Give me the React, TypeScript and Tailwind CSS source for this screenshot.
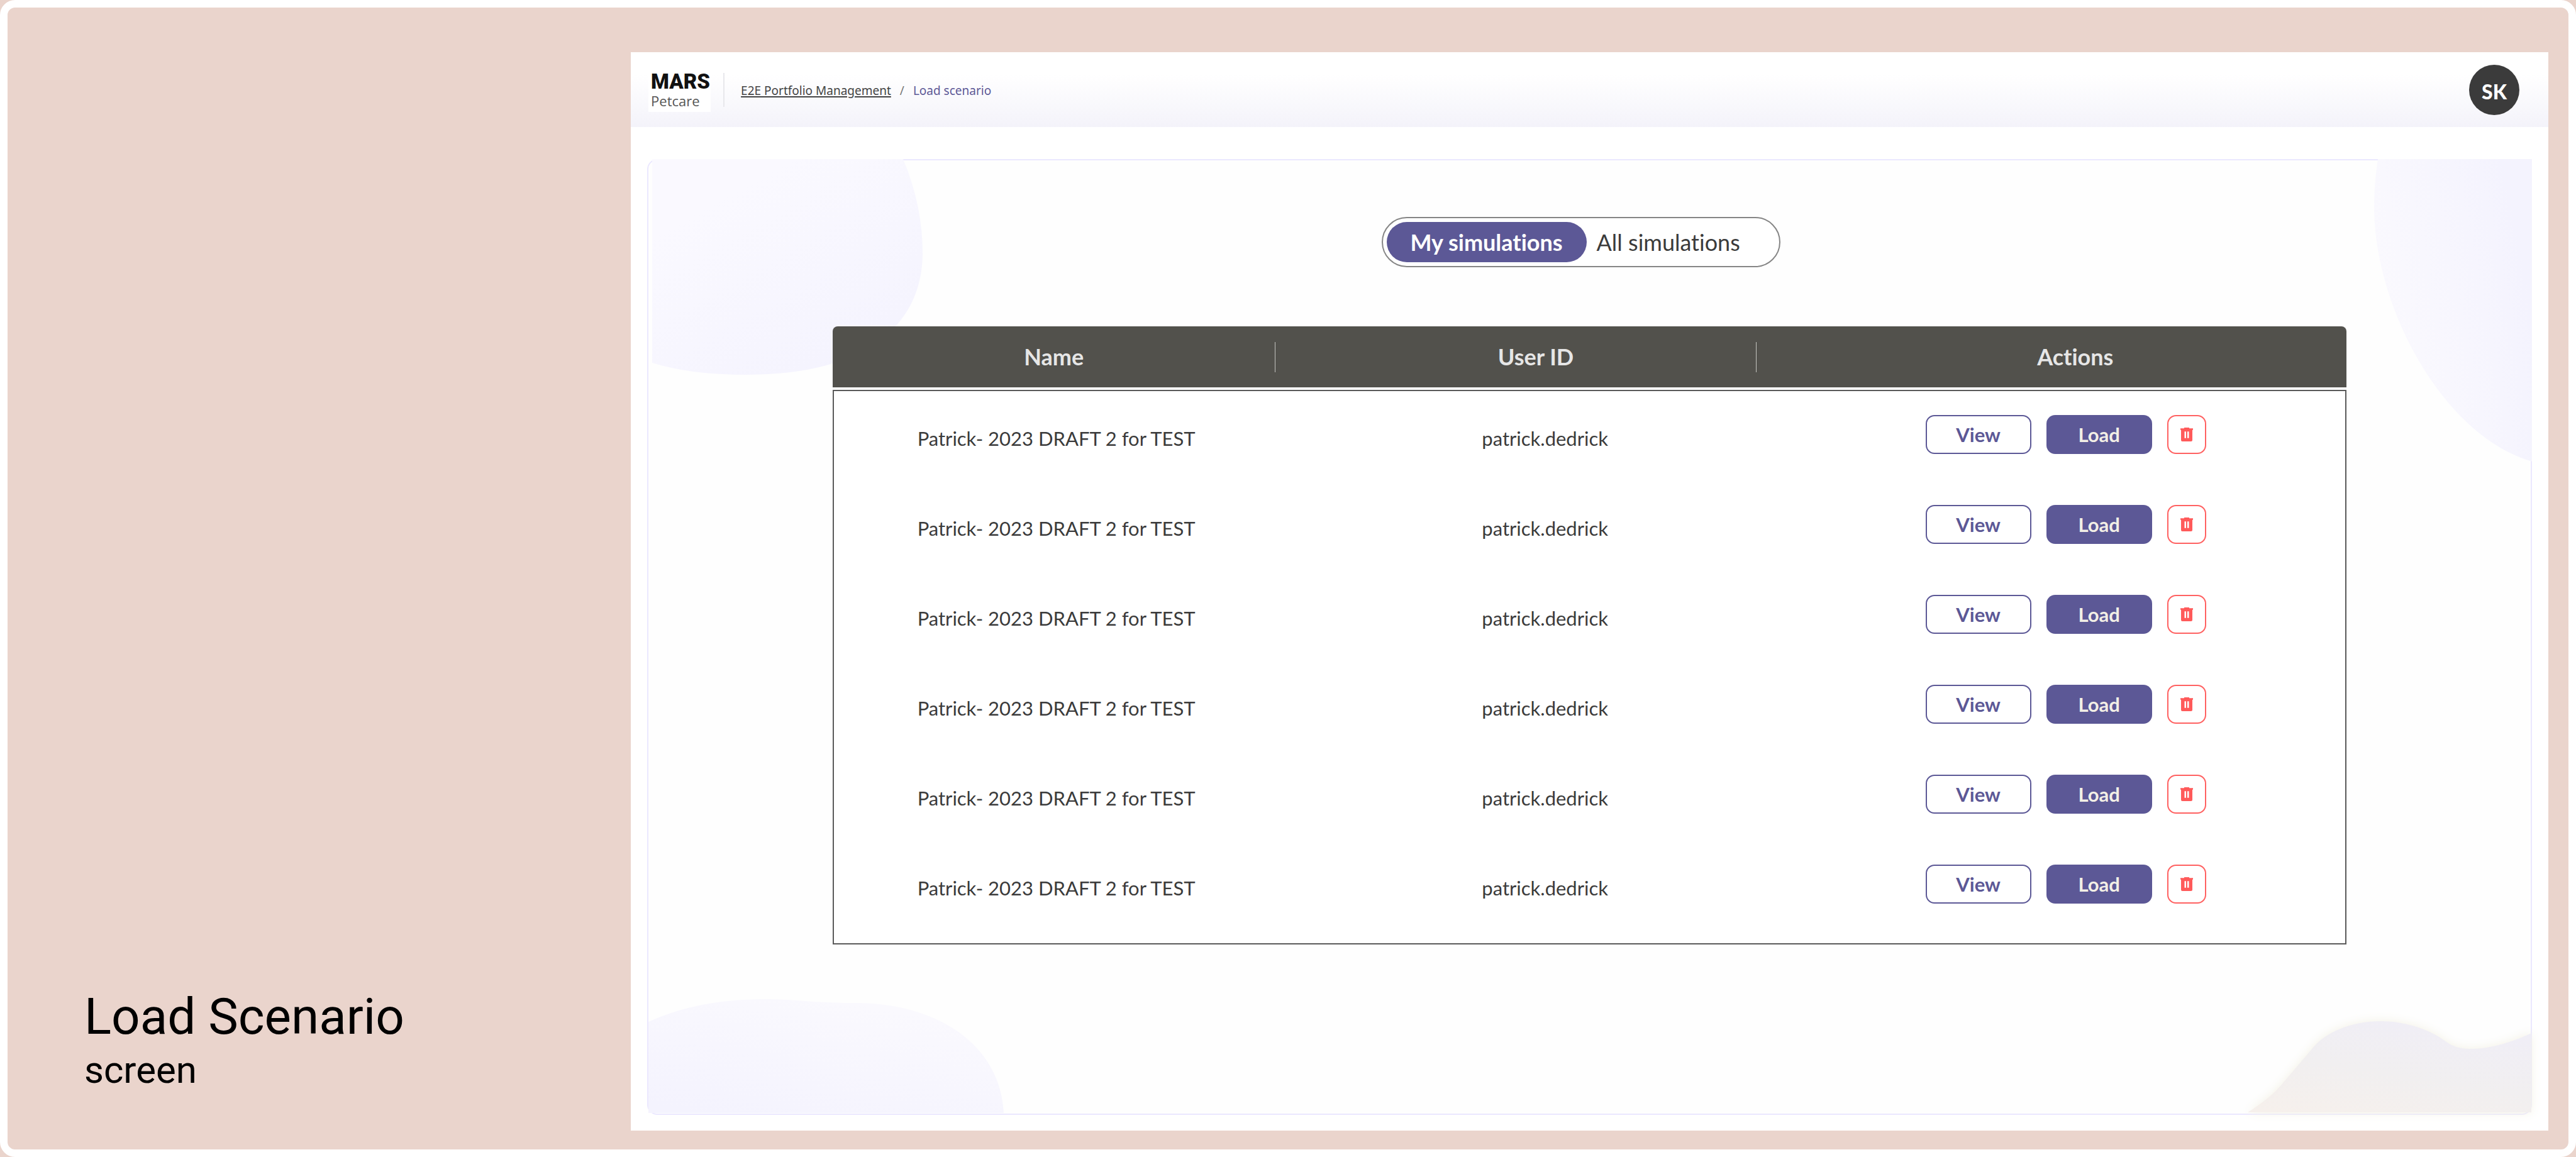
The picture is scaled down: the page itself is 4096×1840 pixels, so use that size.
const scenarios = Array.from({ length: 6 }, (_, i) => ({
  id: i + 1,
  name: "Patrick- 2023 DRAFT 2 for TEST",
  user: "patrick.dedrick",
}));

function TrashIcon() {
  return (
    <svg viewBox="0 0 20 22" className="h-[22px] w-5" aria-hidden="true">
      <path
        fill="currentColor"
        fillRule="evenodd"
        d="M6 0h8v1.2H20v2.500h-1V20a2 2 0 0 1-2 2H3a2 2 0 0 1-2-2V3.700H0V1.200h6zM6.500 6.200h2.500v10.600H6.500zM11 6.200h2.500v10.600H11z"
      />
    </svg>
  );
}

function Backdrop() {
  return (
    <div className="pointer-events-none" aria-hidden="true">
      <svg viewBox="0 0 440 345" className="absolute -top-0.5 left-1.5 h-[345px] w-[440px]">
        <defs>
          <linearGradient id="blobTopLeft" x1="0.1" y1="0" x2="0.8" y2="1">
            <stop offset="0.2" stopColor="#faf9ff" />
            <stop offset="1" stopColor="#f4f3fe" />
          </linearGradient>
        </defs>
        <path
          fill="url(#blobTopLeft)"
          d="M0 0H399C420 50 430 100 430 149C430 255 352 343 149 343C92 343 42 337 0 324Z"
        />
      </svg>
      <svg viewBox="0 0 252 482" className="absolute -top-0.5 -right-0.5 h-[482px] w-[252px]">
        <defs>
          <linearGradient id="blobTopRight" x1="0" y1="0.6" x2="1" y2="0.2">
            <stop offset="0.1" stopColor="#faf9fe" />
            <stop offset="0.9" stopColor="#f4f3fe" />
          </linearGradient>
        </defs>
        <path fill="url(#blobTopRight)" d="M7 0C3 25 1 50 1 77C1 235 110 440 252 481V0Z" />
      </svg>
      <svg viewBox="0 0 566 183" className="absolute bottom-0 left-0 h-[183px] w-[566px]">
        <defs>
          <linearGradient id="blobBottomLeft" x1="0.15" y1="1" x2="0.75" y2="0">
            <stop offset="0" stopColor="#f4f3fe" />
            <stop offset="0.9" stopColor="#faf9fe" />
          </linearGradient>
        </defs>
        <path
          fill="url(#blobBottomLeft)"
          d="M0 37C60 10 120 1 189 1C235 1 260 7 336 7C470 10 560 80 565 182H0Z"
        />
      </svg>
      <svg
        viewBox="0 0 464 157"
        className="absolute -right-0.5 bottom-0 h-[157px] w-[464px] overflow-visible drop-shadow-[0_0_8px_#f4f2e6]"
      >
        <defs>
          <linearGradient id="blobBottomRight" x1="0.1" y1="1" x2="0.6" y2="0">
            <stop offset="0" stopColor="#f6f0ec" />
            <stop offset="0.5" stopColor="#f1eff0" />
            <stop offset="1" stopColor="#f0eef6" />
          </linearGradient>
        </defs>
        <path
          fill="url(#blobBottomRight)"
          d="M12 155C40 137 55 124 69 107L115 53C135 28 175 10 224 10C265 10 305 25 328 43C338 50 350 54 366 54C400 54 435 42 463 29V155Z"
        />
      </svg>
    </div>
  );
}

function TopBar() {
  return (
    <header className="flex h-[119px] items-center bg-linear-to-b from-white from-30% to-[#f4f3fa] pr-[46px] pl-7 font-['Open_Sans',sans-serif]">
      <div className="w-[99px] bg-white pt-1.5 pb-1 pl-1">
        <div className="font-['Roboto',sans-serif] text-[33px] leading-8 font-black text-[#111]">MARS</div>
        <div className="text-[22px] leading-7 text-[#555]">Petcare</div>
      </div>
      <div className="ml-5 h-[54px] w-0.5 bg-[#e8e8ec]" />
      <nav
        aria-label="Breadcrumb"
        className="ml-[26px] flex items-center gap-3.5 pt-1 font-['Noto_Sans',sans-serif] text-[19px] text-[#444]"
      >
        <a href="#portfolio" className="underline decoration-2 underline-offset-2">
          E2E Portfolio Management
        </a>
        <span className="text-[#777]">/</span>
        <a href="#load" aria-current="page" className="text-[#5c5896]">
          Load scenario
        </a>
      </nav>
      <button
        type="button"
        className="ml-auto size-20 rounded-full bg-[#3b3b3b] pt-1.5 font-['Lato',sans-serif] text-[32px] font-black text-white"
      >
        SK
      </button>
    </header>
  );
}

function ScopeToggle() {
  return (
    <div className="flex h-20 w-[634px] rounded-full border-2 border-[#858585] bg-white p-1.5 text-4xl">
      <button type="button" aria-pressed="true" className="w-[318px] rounded-full bg-[#5c5896] font-bold text-white">
        My simulations
      </button>
      <button type="button" aria-pressed="false" className="px-4 text-[#3b3b3b]">
        All simulations
      </button>
    </div>
  );
}

const rowGrid = "grid grid-cols-[704fr_764fr_938fr]";

function ScenarioTable() {
  return (
    <table className="flex w-full flex-col gap-1">
      <thead className="block rounded-t-lg bg-[#52514c] text-4xl leading-[97px] text-[#e6e6e6]">
        <tr className={rowGrid}>
          <th scope="col" className="flex items-center justify-center leading-[97px]">
            <span className="flex-1">Name</span>
            <span className="h-12 w-px bg-[#c4c4c0]" />
          </th>
          <th scope="col" className="flex items-center justify-center leading-[97px]">
            <span className="flex-1 pl-16">User ID</span>
            <span className="h-12 w-px bg-[#c4c4c0]" />
          </th>
          <th scope="col" className="pl-19 leading-[97px]">
            Actions
          </th>
        </tr>
      </thead>
      <tbody className="block border-2 border-[#5a5a5a] bg-white pb-5 text-[31px] leading-[62px]">
        {scenarios.map((s) => (
          <tr key={s.id} className={`${rowGrid} h-[143px]`}>
            <td className="pt-11 pl-1 text-center text-[#3b3b3b]">{s.name}</td>
            <td className="pt-11 pl-23 text-center text-[#3b3b3b]">{s.user}</td>
            <td className="flex items-start justify-center gap-6 pt-[38px] pl-12">
              <button
                type="button"
                className="h-[62px] w-[168px] rounded-[14px] border-2 border-[#5c5896] bg-white leading-[58px] font-bold text-[#5c5896]"
              >
                View
              </button>
              <button
                type="button"
                className="h-[62px] w-[168px] rounded-[14px] bg-[#5c5896] font-bold text-[#f3efe6]"
              >
                Load
              </button>
              <button
                type="button"
                aria-label="Delete"
                className="flex size-[62px] items-center justify-center rounded-[14px] border-2 border-[#ff6161] bg-white text-[#ff5a5a]"
              >
                <TrashIcon />
              </button>
            </td>
          </tr>
        ))}
      </tbody>
    </table>
  );
}

export default function App() {
  return (
    <div className="bg-[#ead4cc]">
      <div className="flex min-h-screen rounded-3xl border-[12px] border-white bg-[#ead4cc]">
        <aside className="flex w-[24.34%] shrink-0 flex-col justify-end pb-[90px] pl-[122px] font-['Roboto',sans-serif] text-black">
          <h1 className="text-[80px] leading-[98px]">Load Scenario</h1>
          <p className="text-[60px] leading-[72px]">screen</p>
        </aside>
        <div className="mt-[71px] mr-8 mb-[30px] flex flex-1 flex-col bg-white font-['Lato',sans-serif] [font-variant-ligatures:none]">
          <TopBar />
          <main className="relative mx-[26px] mt-[51px] mb-[25px] flex flex-1 flex-col items-center rounded-2xl border-2 border-[#ebe8ff] bg-[#fefefe] px-[293px] pt-[90px]">
            <Backdrop />
            <div className="relative mb-[94px] pr-7">
              <ScopeToggle />
            </div>
            <div className="relative w-full">
              <ScenarioTable />
            </div>
          </main>
        </div>
      </div>
    </div>
  );
}
